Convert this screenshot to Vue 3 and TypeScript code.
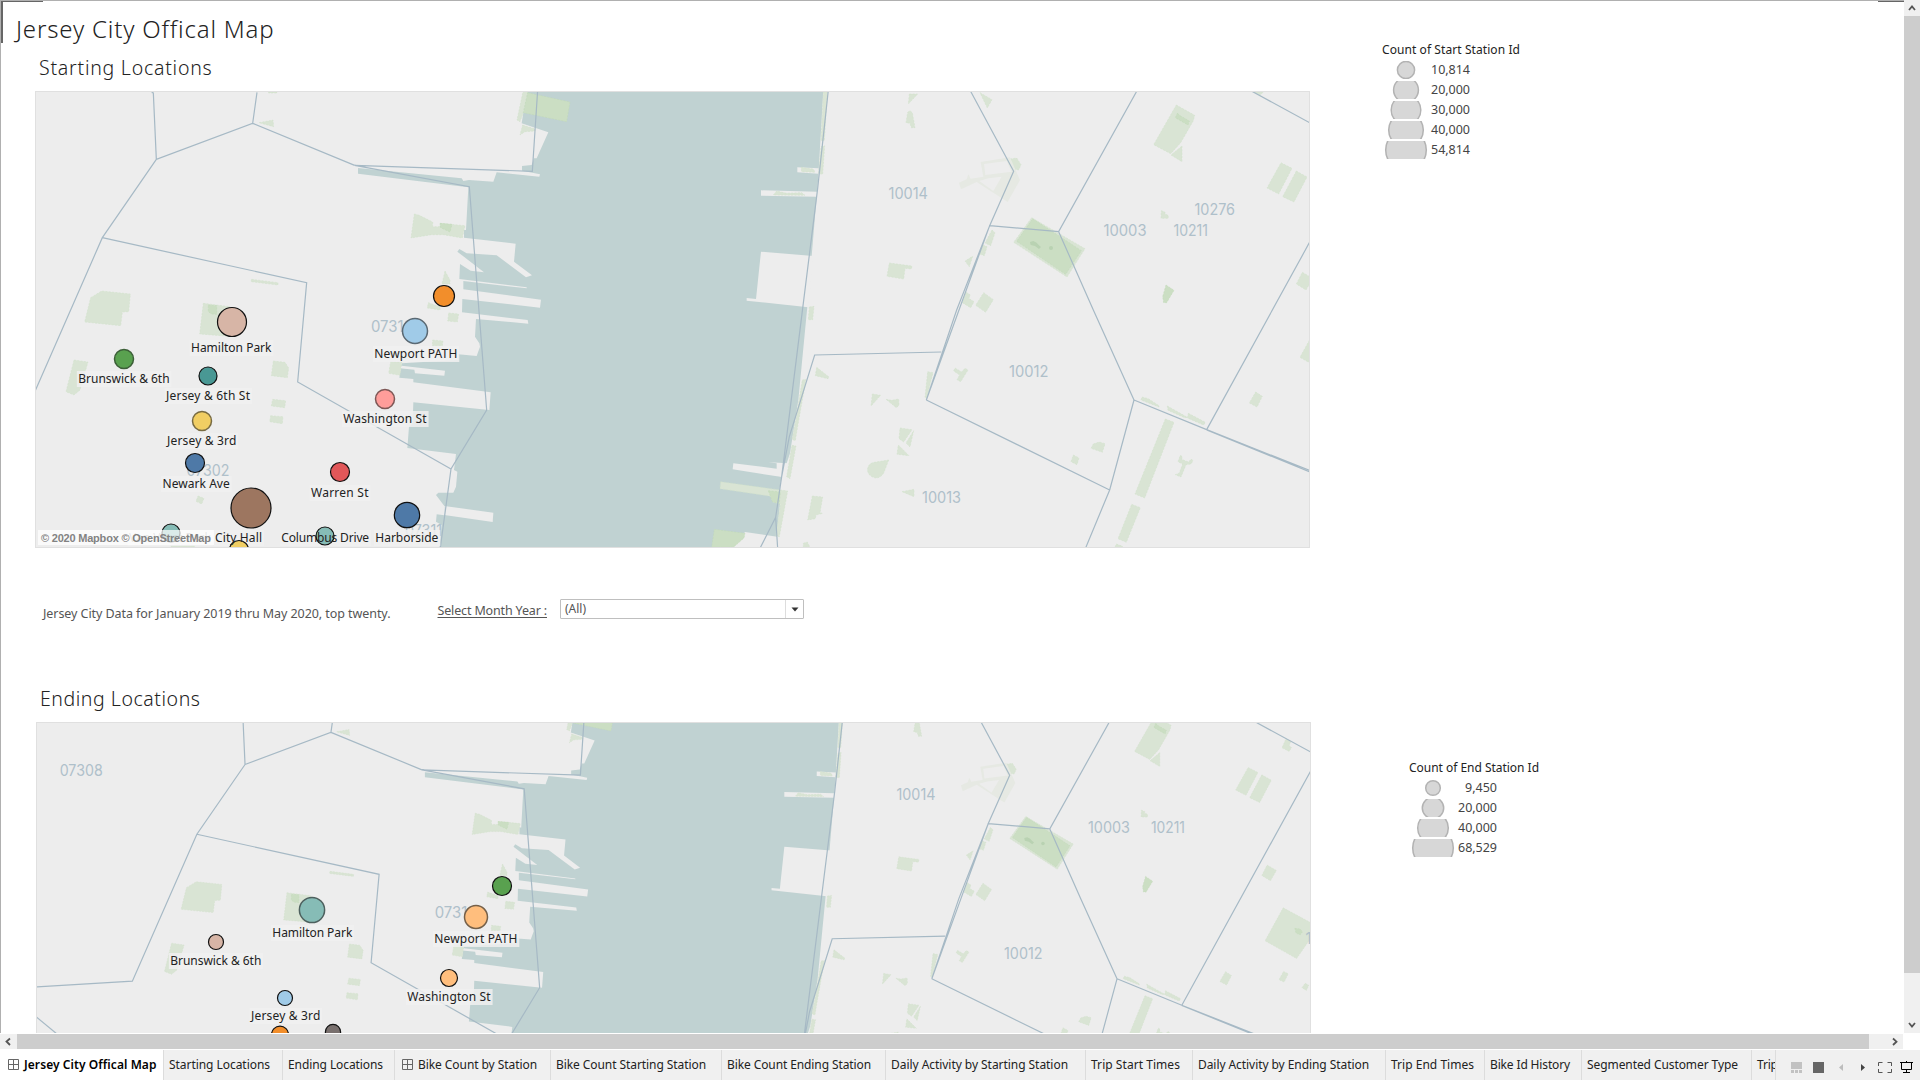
<script setup lang="ts">
import type { Directive } from 'vue'

interface Marker { x: number; y: number; r: number; fill: string; stroke?: string }
interface MapText { t: string; x: number; y: number; w: number; faded?: boolean }
interface MapView {
  id: string
  viewBox: string
  transform: string
  clipHeight: number
  zips: MapText[]
  labels: MapText[]
  markers: Marker[]
}
interface Legend { id: string; title: string; width: number; rows: { r: number; n: string; w: number }[] }

const vFit: Directive<HTMLElement, number> = {
  mounted(el, binding) {
    const chars = (el.textContent ?? '').trim().length
    const natural = el.getBoundingClientRect().width
    el.style.letterSpacing = `${((binding.value - natural) / chars).toFixed(3)}px`
  },
}

const startMap: MapView = {
  id: 'start',
  viewBox: '36 92 1273 455',
  transform: '',
  clipHeight: 455,
  zips: [
    { t: '10014', x: 888.5, y: 199.3, w: 39.5 },
    { t: '10276', x: 1194.5, y: 214.8, w: 40.5 },
    { t: '10003', x: 1103.5, y: 235.6, w: 43 },
    { t: '10211', x: 1173.5, y: 235.6, w: 34.5 },
    { t: '10012', x: 1009, y: 377.2, w: 39.5 },
    { t: '10013', x: 922, y: 503.2, w: 39 },
    { t: '07310', x: 371, y: 332, w: 42 },
    { t: '07302', x: 186.5, y: 476, w: 43 },
    { t: '07311', x: 405, y: 535.5, w: 37 },
  ],
  labels: [
    { t: 'Hamilton Park', x: 191, y: 352, w: 80.5 },
    { t: 'Newport PATH', x: 374.3, y: 358, w: 83 },
    { t: 'Brunswick & 6th', x: 78.3, y: 383, w: 91.3 },
    { t: 'Jersey & 6th St', x: 166, y: 400, w: 84 },
    { t: 'Washington St', x: 343.3, y: 423, w: 83.3 },
    { t: 'Jersey & 3rd', x: 167, y: 445, w: 69.3 },
    { t: 'Newark Ave', x: 162.5, y: 488, w: 67.3 },
    { t: 'Warren St', x: 311, y: 497, w: 57.5 },
    { t: 'Van Vorst Park', x: 129, y: 542, w: 82, faded: true },
    { t: 'City Hall', x: 215, y: 542, w: 47 },
    { t: 'Columbus Drive', x: 281.3, y: 542, w: 87.8 },
    { t: 'Harborside', x: 375.3, y: 542, w: 63 },
  ],
  markers: [
    { x: 444, y: 296, r: 10.5, fill: '#f28e2b' },
    { x: 232, y: 322, r: 14.5, fill: '#d7b5a6' },
    { x: 415, y: 331, r: 12.5, fill: '#a0cbe8', stroke: '#5a6973' },
    { x: 124, y: 359, r: 9.5, fill: '#59a14f', stroke: '#3c5f38' },
    { x: 208, y: 376, r: 9, fill: '#499894' },
    { x: 385, y: 399, r: 9.5, fill: '#ff9d9a', stroke: '#7d5755' },
    { x: 202, y: 421, r: 9.5, fill: '#f1ce63', stroke: '#786b42' },
    { x: 195, y: 463, r: 9.5, fill: '#4e79a7' },
    { x: 340, y: 472, r: 9.5, fill: '#e15759' },
    { x: 251, y: 508, r: 20, fill: '#9d7660' },
    { x: 407, y: 515, r: 12.7, fill: '#4e79a7' },
    { x: 171, y: 533, r: 9, fill: '#86bcb6' },
    { x: 325, y: 536, r: 9, fill: '#86bcb6' },
    { x: 239, y: 550, r: 9.5, fill: '#f1ce63' },
  ],
}

const endMap: MapView = {
  id: 'end',
  viewBox: '37 723 1273 310',
  transform: 'translate(105.6 622.6) scale(0.8919 0.8905)',
  clipHeight: 310,
  zips: [
    { t: '07308', x: 59.7, y: 776, w: 43 },
    { t: '10014', x: 896.5, y: 800.2, w: 39 },
    { t: '10003', x: 1088, y: 832.5, w: 42 },
    { t: '10211', x: 1151, y: 832.5, w: 34 },
    { t: '10012', x: 1004, y: 958.5, w: 38.5 },
    { t: '10009', x: 1305.5, y: 944.3, w: 43 },
    { t: '07310', x: 434.7, y: 918.3, w: 42 },
  ],
  labels: [
    { t: 'Hamilton Park', x: 272.3, y: 937, w: 80 },
    { t: 'Newport PATH', x: 434.3, y: 943, w: 83 },
    { t: 'Brunswick & 6th', x: 170.3, y: 965, w: 91 },
    { t: 'Washington St', x: 407.3, y: 1001, w: 83.3 },
    { t: 'Jersey & 3rd', x: 251, y: 1020, w: 69.3 },
  ],
  markers: [
    { x: 502, y: 886, r: 9.5, fill: '#59a14f' },
    { x: 312, y: 910, r: 12.6, fill: '#86bcb6', stroke: '#4d605e' },
    { x: 476, y: 917, r: 11.5, fill: '#ffbe7d', stroke: '#756049' },
    { x: 216, y: 942, r: 7.5, fill: '#d7b5a6' },
    { x: 449, y: 978, r: 8.5, fill: '#ffbe7d' },
    { x: 285, y: 998, r: 7.5, fill: '#a0cbe8' },
    { x: 280, y: 1034.7, r: 8.5, fill: '#f28e2b' },
    { x: 333, y: 1032, r: 7.6, fill: '#79706e' },
  ],
}

/* Geometry is drawn in tiles of one third of a pixel; each tile has its own origin. */
const waterTile = 'translate(400 80) scale(0.33333)'
const water =
  'M385 30H1270L1255 290 1250 350 1235 528 1222 680 1195 960 1170 1120 1160 1150 1145 1190 1138 1230 1140 1270 1130 1370V1410H118L125 1335 108 1325 110 1303 133 1306V1278L108 1245 115 1238H160L168 1220 172 1175 162 1170 168 1122 22 1104 27 1040 38 1030 40 967 268 990 272 937 40 907V897L-2 893 5 850 175 840V823L230 828 240 800 238 790 225 770 228 717 385 731 383 720 186 697 187 657 420 683 423 659 190 628V603L380 625V622L178 597 180 552 212 572 252 577 172 515 178 507 200 520 290 526 378 592 396 586 342 545 347 491 192 473V450H198L205 322 -126 281V264L185 295 190 303 207 300 280 305 290 277 418 290 420 283 366 272V258L395 255 402 235H410L445 157 365 130 370 98Z'
const piers = [
  'M133 1278L280 1298 278 1326 133 1305Z',
  'M5 857L135 872 133 887 45 880 43 869 0 865Z',
  'M1083 331L1252 335 1250 350 1083 347Z',
  'M1192 262L1256 265 1255 281 1192 277Z',
  'M1083 515L1240 528 1225 682 1040 662V654L1068 657Z',
  'M1000 1150L1130 1166V1150L1105 1147 1164 1150 1146 1191 998 1168Z',
  'M1035 1356L1132 1370V1410H990Z',
]

interface Tile { origin: string; light: string[]; dark: string[] }
const parks: Tile[] = [
  {
    origin: 'translate(400 80) scale(0.33333)',
    light: [
      'M370 30L385 30 370 98 360 125 351 120Z',
      'M368 135L405 147V153L375 155 360 165Z',
      'M43 402L58 406 98 426V440H118L122 430 195 437 187 474 130 464H95L33 474Z',
      'M135 573L150 600V612H126Z',
      'M85 668L120 680V690L82 684Z',
      'M146 699L176 702 172 726 143 723Z',
      'M98 780L129 783 127 797H97Z',
      'M1270 36H1282L1273 182H1263Z',
      'M1263 200L1274 197 1268 283 1256 280Z',
      'M1203 262L1240 267 1245 277 1205 275Z',
      'M1120 345L1130 333 1160 340 1205 338 1215 346Z',
      'M1228 681L1242 679 1238 719H1225Z',
      'M1250 862L1287 891 1284 896 1246 887Z',
      'M1207 900L1218 898 1192 1045 1186 1082 1176 1078 1183 1045Z',
      'M1176 1096L1188 1098 1170 1196 1160 1190Z',
      'M962 1205L1163 1233 1138 1370 1128 1368 1141 1272 1118 1266 1112 1249 960 1226Z',
      'M1237 1248L1268 1251 1260 1298 1268 1300 1248 1305 1246 1316 1223 1320Z',
      'M1210 1390L1222 1386 1230 1402H1210Z',
    ],
    dark: [
      'M383 38L510 66 500 125 370 98Z',
      'M120 430L156 433 150 456 122 443Z',
      'M1105 1232L1141 1236 1138 1270 1118 1266Z',
      'M943 1348L1035 1360 1032 1374 1000 1402H935Z',
    ],
  },
  {
    origin: 'scale(0.33333)',
    light: ['M806 276H831V279H806Z', 'M777 368L819 360 821 380Z', 'M755 838L834 848V855L753 845Z'],
    dark: [],
  },
  {
    origin: 'translate(0 280) scale(0.33333)',
    light: [
      'M272 53L305 33 391 42 386 95 367 96 362 137 254 126Z',
      'M610 70L690 80 700 170 599 162Z',
      'M222 240L264 246 240 330 222 345 198 335Z',
      'M820 243L855 247 866 264 862 293 814 287Z',
      'M818 358L857 362 854 383 814 378Z',
      'M812 407L849 410 847 431 809 425Z',
      'M1172 245L1205 247 1200 286 1166 280Z',
      'M594 648L612 655 605 672 588 664Z',
      'M513 795H583V802H513Z',
    ],
    dark: ['M625 75L650 77V103L635 102 625 95Z'],
  },
  {
    origin: 'translate(860 80) scale(0.33333)',
    light: [
      'M148 42H173L145 72Z',
      'M143 97L150 92 157 98 165 143H154L150 130 138 128Z',
      'M360 38L396 59 382 84Z',
      'M949 75L1004 106 1000 122 962 188 932 221 881 194Z',
      'M966 198V245L933 225Z',
      'M1183 36H1210L1200 46Z',
      'M450 237L470 234 483 254 476 270 464 268Z',
      'M1263 248L1296 265 1256 342 1221 324Z',
      'M1309 273L1341 291 1302 366 1268 350Z',
      'M88 549L156 558 154 567 135 565 131 597 81 589Z',
      'M396 450L405 458 392 497 375 489Z',
      'M369 495L381 500 373 527 359 522Z',
      'M338 529L328 560 315 543Z',
      'M318 636L331 645 326 655 342 665 332 683 307 668Z',
      'M371 638L400 659 377 697 347 676Z',
      'M515 413L675 506 621 591 461 487Z',
      'M904 392L915 396V403L924 405 925 415H903Z',
      'M1327 577L1358 595 1338 630 1309 612Z',
      'M1390 152L1407 160 1401 174 1409 181 1401 194 1377 182Z',
    ],
    dark: [
      'M952 100L962 108 988 123 984 135 946 113Z',
      'M518 416L664 512 617 583 470 484Z',
      'M918 615L942 631 920 668H911L908 650Z',
    ],
  },
  {
    origin: 'translate(860 310) scale(0.33333)',
    light: [
      'M203 185L219 188 200 265 195 262Z',
      'M285 174L305 186 315 175 324 180 302 215 291 209 299 195 281 183Z',
      'M37 252L62 256 33 288Z',
      'M78 268L95 271 116 267 117 286 109 293Z',
      'M120 354L156 359 131 396 117 386Z',
      'M161 362L150 411 138 399Z',
      'M115 405L147 437 111 433Z',
      'M86 450L72 487C63 506 42 510 27 493 16 476 27 459 43 457Z',
      'M126 545L162 538V560Z',
      'M846 261L865 266 897 287V291L843 270Z',
      'M922 288L982 322 974 323 924 301Z',
      'M985 310L1036 337 1031 345 982 324Z',
      'M916 327L942 337 854 564 825 552Z',
      'M815 583L841 593 799 697 774 686Z',
      'M769 702L788 709 784 714H764Z',
      'M961 436L967 440 965 448 985 456 994 447 999 452 993 462 978 464 963 501 946 494 958 489 968 462 954 455Z',
      'M1187 246L1207 259 1191 291 1168 279Z',
      'M700 402L718 396 735 401 727 427 693 415Z',
      'M640 435L657 444 651 464 633 455Z',
      'M1381 31L1500 95 1426 202 1320 142Z',
      'M1382 245L1398 253 1384 281 1367 273Z',
      'M1455 285L1467 292 1459 309 1444 300Z',
    ],
    dark: ['M1420 100L1438 102 1446 112 1438 122 1424 116Z'],
  },
]

const boundaries = [
  { origin: 'scale(0.33333)', d: 'M455 277L460 279 469 478 758 370 771 277M758 370L1064 496M469 478L307 713 90 1208-240 1228M307 713L920 848 893 1146 1353 1407' },
  { origin: waterTile, d: 'M413 30L397 274-136 256 208 320 260 990 153 1167 120 1410M1285 30L1253 325 1145 1190 1127 1312 1080 1405M1127 1312L1133 1405M1624 816L1244 825 1168 1070 1145 1190' },
  { origin: 'translate(860 80) scale(0.33333)', d: 'M333 36L461 274 389 437 290 690 199 960M389 437L297 690 199 960M389 437L596 455 830 34M596 455L700 690 822 960M1176 34L1490 205M1040 1049L1480 248M333 36L300-24' },
  { origin: 'translate(860 310) scale(0.33333)', d: 'M199 270L749 540 676 716M822 270L749 540M822 270L1040 359 1348 481M1040 360L1348 485' },
]

const legends: Legend[] = [
  {
    id: 'legend-start',
    title: 'Count of Start Station Id',
    width: 138,
    rows: [
      { r: 8.6, n: '10,814', w: 39 },
      { r: 12.4, n: '20,000', w: 39 },
      { r: 14.8, n: '30,000', w: 39 },
      { r: 17.3, n: '40,000', w: 39 },
      { r: 20.3, n: '54,814', w: 39 },
    ],
  },
  {
    id: 'legend-end',
    title: 'Count of End Station Id',
    width: 130,
    rows: [
      { r: 7.3, n: '9,450', w: 32 },
      { r: 10.7, n: '20,000', w: 39 },
      { r: 15.3, n: '40,000', w: 39 },
      { r: 20.3, n: '68,529', w: 39 },
    ],
  },
]

const maps = { start: startMap, end: endMap }

const tabs = [
  { t: 'Jersey City Offical Map', w: 164, tw: 132.5, grid: true, active: true },
  { t: 'Starting Locations', w: 119, tw: 101 },
  { t: 'Ending Locations', w: 112, tw: 95 },
  { t: 'Bike Count by Station', w: 156, tw: 119, grid: true },
  { t: 'Bike Count Starting Station', w: 171, tw: 150 },
  { t: 'Bike Count Ending Station', w: 164, tw: 144 },
  { t: 'Daily Activity by Starting Station', w: 200, tw: 177 },
  { t: 'Trip Start Times', w: 107, tw: 89 },
  { t: 'Daily Activity by Ending Station', w: 193, tw: 171 },
  { t: 'Trip End Times', w: 99, tw: 83 },
  { t: 'Bike Id History', w: 97, tw: 80 },
  { t: 'Segmented Customer Type', w: 170, tw: 151 },
  { t: 'Trip Duration', w: 90, tw: 72 },
]
</script>

<template>
  <div class="app">
    <div class="workspace">
      <main class="dashboard">
        <i class="corner corner-h"></i><i class="corner corner-v"></i><i class="corner corner-r"></i>
        <section class="content">
          <h1><span v-fit="258.500">Jersey City Offical Map</span></h1>
          <template v-for="(m, key) in maps" :key="key">
            <h2 :class="'h-' + key">
              <span v-if="key === 'start'" v-fit="173.500">Starting Locations</span>
              <span v-else v-fit="160.500">Ending Locations</span>
            </h2>
            <div class="map" :class="'map-' + key">
              <svg width="1273" :height="m.clipHeight" :viewBox="m.viewBox">
                <g :transform="m.transform">
                  <g :transform="waterTile">
                    <path :d="water" class="water" />
                    <path v-for="p in piers" :key="p" :d="p" class="land" />
                  </g>
                  <g v-for="tile in parks" :key="tile.origin" :transform="tile.origin">
                    <path v-for="p in tile.light" :key="p" :d="p" class="park" />
                    <path v-for="p in tile.dark" :key="p" :d="p" class="park deep" />
                  </g>
                  <g transform="translate(860 80) scale(0.33333)">
                    <path class="campus" d="M362 246L450 232 480 300 443 366 350 306 303 328 297 308 320 298 325 283 332 296 370 290ZM372 252L376 285 455 275 440 243ZM358 303L400 333 425 290 385 295Z" />
                    <path class="tree" d="M510 486L520 483 530 488 536 495 543 501 537 507 525 498 512 495Z" />
                    <circle class="tree" cx="573" cy="504" r="6" />
                  </g>
                  <g v-for="b in boundaries" :key="b.origin" :transform="b.origin">
                    <path :d="b.d" class="boundary" />
                  </g>
                </g>
                <path v-if="key === 'end'" class="boundary" d="M36.500 1017L57 1034" />
                <text v-for="z in m.zips" :key="z.t" class="zip" :x="z.x" :y="z.y" :textLength="z.w" lengthAdjust="spacingAndGlyphs">{{ z.t }}</text>
                <rect v-for="l in m.labels" :key="l.t" class="label-bg" :x="l.x - 1.500" :y="l.y - 12" :width="l.w + 3.500" height="16" />
                <circle v-for="c in m.markers" :key="c.x" :cx="c.x" :cy="c.y" :r="c.r" :fill="c.fill" :stroke="c.stroke ?? '#111'" :stroke-width="c.stroke ? 1.500 : 1.200" />
                <text v-for="l in m.labels" :key="l.t" class="label" :class="{ faded: l.faded }" :x="l.x" :y="l.y" :textLength="l.w">{{ l.t }}</text>
                <g v-if="key === 'start'">
                  <rect x="38" y="530" width="176" height="15" class="credit-bg" />
                  <text x="41" y="542" textLength="170" class="credit">© 2020 Mapbox © OpenStreetMap</text>
                </g>
              </svg>
            </div>
            <div v-if="key === 'start'" class="controls">
              <p class="note"><span v-fit="347.500">Jersey City Data for January 2019 thru May 2020, top twenty.</span></p>
              <label class="filter-label"><span v-fit="109.500">Select Month Year :</span></label>
              <div class="dropdown">
                <span class="value">(All)</span>
                <span class="drop"><svg width="8" height="5" viewBox="0 0 8 5"><path d="M.5.5h7L4 4.500Z" fill="#333" /></svg></span>
              </div>
            </div>
          </template>
        </section>
        <aside class="legends">
          <div v-for="lg in legends" :key="lg.id" class="legend" :class="lg.id">
            <h3><span v-fit="lg.width">{{ lg.title }}</span></h3>
            <div v-for="row in lg.rows" :key="row.n" class="legend-row">
              <svg width="44" height="18" viewBox="-22 -9 44 18"><circle :r="row.r" fill="#d7d7d7" stroke="#b3b3b3" stroke-width="1.500" /></svg>
              <span class="num"><span v-fit="row.w">{{ row.n }}</span></span>
            </div>
          </div>
        </aside>
      </main>
      <div class="vscroll">
        <svg width="16" height="16" viewBox="0 0 16 16"><path d="M5 10l3-3.500 3 3.500" class="chev" /></svg>
        <div class="vthumb"></div>
        <svg class="last" width="16" height="16" viewBox="0 0 16 16"><path d="M5 6l3 3.500 3-3.500" class="chev" /></svg>
      </div>
    </div>
    <div class="hscroll">
      <svg width="17" height="15" viewBox="0 0 17 15"><path d="M10 4.500L6.500 7.500 10 11" class="chev" /></svg>
      <div class="hthumb"></div>
      <svg class="last" width="17" height="15" viewBox="0 0 17 15"><path d="M7 4.500l3.500 3.200L7 11" class="chev" /></svg>
    </div>
    <footer class="tabbar">
      <nav class="tabs">
        <div v-for="tab in tabs" :key="tab.t" class="tab" :class="{ active: tab.active, grid: tab.grid }" :style="{ width: tab.w + 'px' }">
          <svg v-if="tab.grid" class="grid-icon" width="11" height="11" viewBox="0 0 11 11"><path d="M.5.5h10v10H.5ZM5.500.5v10M.5 5.500h10" fill="none" stroke="#666" /></svg>
          <span v-fit="tab.tw">{{ tab.t }}</span>
        </div>
      </nav>
      <div class="tools">
        <svg width="144" height="30" viewBox="1776 1050 144 30">
          <path fill="#c2c2c2" d="M1791 1062h11v7h-11zM1791 1070h3v3h-3zM1795 1070h3v3h-3zM1799 1070h3v3h-3z" />
          <path fill="#666" d="M1813 1062h11v11h-11z" />
          <path fill="#bdbdbd" d="M1843 1064v7l-4-3.500z" />
          <path fill="#444" d="M1861 1064v7l4-3.500z" />
          <path fill="none" stroke="#555" d="M1878.500 1066v-3.500h4M1887.500 1062.500h4v3.500M1891.500 1069v3.500h-4M1882.500 1072.500h-4v-3.500" />
          <path fill="none" stroke="#000" d="M1900 1062.500h13M1901.500 1062v7.500h10v-7.500M1906.500 1061v1M1906.500 1069.500v3M1903 1072.500h7" />
        </svg>
      </div>
    </footer>
  </div>
</template>

<style>
html, body { margin: 0; overflow: hidden; background: #fff; }
</style>

<style scoped>
.app { width: 1920px; height: 1080px; display: flex; flex-direction: column; background: #fff; font-family: "Noto Sans", "Open Sans", sans-serif; color: #333; overflow: hidden; }
h1, h2, h3, p { margin: 0; font-weight: 400; white-space: nowrap; }
svg { display: block; flex: none; }
.workspace { display: flex; height: 1033px; }
.dashboard { position: relative; display: flex; flex: 1; box-sizing: border-box; border-left: 1px solid #b0b0b0; border-top: 1px solid #b0b0b0; overflow: hidden; }
.corner { position: absolute; background: #666; }
.corner-h { left: -1px; top: -1px; width: 43px; height: 2px; }
.corner-v { left: -1px; top: -1px; width: 3px; height: 43px; }
.corner-r { right: 0; top: -1px; width: 26px; height: 2px; }
.content { width: 1310px; flex: none; }
h1 { font-weight: 300; font-size: 24px; line-height: 32px; margin: 12px 0 0 15px; color: #222; height: 32px; }
h2 { font-weight: 300; font-size: 19.500px; line-height: 27px; height: 26px; margin: 9px 0 0 38px; color: #222; }
.map { box-sizing: border-box; border: 1px solid #e0e0e0; background: #ededed; width: 1275px; }
.map-start { margin: 11px 0 0 34px; height: 457px; }
.h-end { margin: 62px 0 0 39px; }
.map-end { margin: 11px 0 0 35px; height: 311px; border-bottom: 0; }
.water { fill: #c0d2d2; }
.land { fill: #ededed; }
.park { fill: #d9e4d4; stroke: #cfe0c8; stroke-width: 1.500; stroke-dasharray: 6 4; }
.park.deep { fill: #cbdec3; stroke: #bfd8b6; }
.campus { fill: #e6e9e3; fill-rule: evenodd; }
.tree { fill: #b9d2b2; }
.boundary { fill: none; stroke: #a6b9c5; stroke-width: 1.200px; vector-effect: non-scaling-stroke; }
.zip { font-family: Inter, "Noto Sans", sans-serif; font-size: 15.300px; fill: #afc0ca; }
.label-bg { fill: #f0f0f0; fill-opacity: .85; }
.label { font-size: 12px; fill: #222; }
.label.faded { fill-opacity: .35; }
.credit-bg { fill: #fff; fill-opacity: .7; }
.credit { font-family: "Liberation Sans", Arial, sans-serif; font-weight: 700; font-size: 11px; fill: #828282; }
.controls { display: flex; height: 75px; box-sizing: border-box; padding-top: 51px; align-items: flex-start; }
.note { margin: 6px 0 0 42px; width: 394.500px; flex: none; font-size: 12.500px; line-height: 18px; color: #555; }
.filter-label { width: 122.500px; font-size: 12.500px; line-height: 18px; padding-top: 3px; color: #555; white-space: nowrap; flex: none; }
.filter-label span { text-decoration: underline; text-underline-offset: 2px; text-decoration-thickness: 1px; }
.dropdown { box-sizing: border-box; width: 244px; height: 20px; border: 1px solid #bfbfbf; border-radius: 1px; display: flex; }
.value { flex: 1; padding-left: 4px; font-size: 12px; line-height: 18px; color: #555; }
.drop { width: 17px; border-left: 1px solid #ddd; display: flex; align-items: center; justify-content: center; }
.legends { width: 300px; padding: 40px 0 0 71px; }
h3 { font-size: 12px; line-height: 18px; height: 18px; color: #222; font-weight: 400; }
.legend-row { display: flex; align-items: center; height: 20px; }
.legend-row svg { height: 18px; margin: 1px 0 0 2px; }
.num { width: 42px; text-align: right; font-size: 12.500px; line-height: 20px; padding-top: 2px; height: 20px; color: #444; }
.legend-end { margin: 600px 0 0 27px; }
.vscroll { width: 16px; height: 1033px; background: #f0f0f0; display: flex; flex-direction: column; }
.vthumb { height: 957px; background: #cdcdcd; }
.last { margin: auto 0 0 auto; }
.chev { fill: none; stroke: #555; stroke-width: 1.800; }
.hscroll { width: 1903px; height: 15px; margin: 1px 0; background: #f0f0f0; display: flex; }
.hthumb { width: 1852px; background: #cdcdcd; }
.tabbar { height: 30px; background: #f0f0f0; display: flex; }
.tabs { width: 1775px; display: flex; overflow: hidden; flex: none; border-right: 1px solid #ddd; }
.tab { flex: none; box-sizing: border-box; border-right: 1px solid #dcdcdc; padding-left: 5px; height: 30px; line-height: 30px; font-size: 12px; color: #222; white-space: nowrap; display: flex; align-items: flex-start; }
.tab.grid { padding-left: 7px; gap: 5px; }
.grid-icon { margin-top: 9px; }
.tab.active { background: #fff; font-weight: 600; color: #000; padding-left: 8px; }
</style>
